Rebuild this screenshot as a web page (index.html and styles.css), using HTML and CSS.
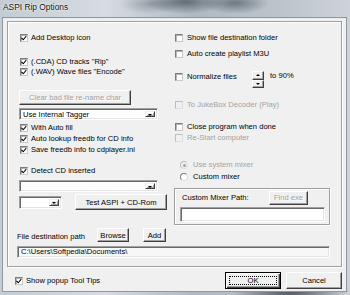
FILE: index.html
```html
<!DOCTYPE html>
<html>

<head>
  <meta charset="UTF-8">
  <title>ASPI Rip Options</title>
  <link rel="stylesheet" href="styles.css">
</head>

<body>
  <div class="window">
    <div class="titlebar">
      <span class="title">ASPI Rip Options</span>
    </div>

    <div class="client">
      <div class="group">
        <div class="cols">
          <!-- Coluna esquerda -->
          <div class="col-left">
            <label class="check r-desktop"><span class="box on"></span>Add Desktop icon</label>
            <label class="check r-cda"><span class="box on"></span>(.CDA) CD tracks "Rip"</label>
            <label class="check"><span class="box on"></span>(.WAV) Wave files "Encode"</label>

            <div class="btn btn-clear disabled">Clear bad file re-name char</div>

            <div class="combo c-tagger"><span class="combo-text">Use Internal Tagger</span><span class="arrow"></span></div>

            <label class="check tall r-autofill"><span class="box on"></span>With Auto fill</label>
            <label class="check tall"><span class="box on"></span>Auto lookup freedb for CD info</label>
            <label class="check tall"><span class="box on"></span>Save freedb info to cdplayer.ini</label>

            <label class="check r-detect"><span class="box on"></span>Detect CD inserted</label>
            <div class="combo c-drive"><span class="combo-text"></span><span class="arrow"></span></div>

            <div class="test-row">
              <div class="combo c-small"><span class="combo-text"></span><span class="arrow"></span></div>
              <div class="btn btn-test">Test ASPI + CD-Rom</div>
            </div>
          </div>

          <!-- Coluna direita -->
          <div class="col-right">
            <label class="check r-show"><span class="box"></span>Show file destination folder</label>
            <label class="check r-m3u"><span class="box"></span>Auto create playlist M3U</label>

            <div class="normalize">
              <label class="check"><span class="box"></span>Normalize files</label>
              <div class="spin">
                <span class="spin-btn"><span class="tri up"></span></span>
                <span class="spin-btn"><span class="tri down"></span></span>
              </div>
              <span class="pct">to 90%</span>
            </div>

            <label class="check disabled r-juke"><span class="box"></span>To JukeBox Decoder (Play)</label>
            <label class="check r-close"><span class="box"></span>Close program when done</label>
            <label class="check tall disabled"><span class="box"></span>Re-Start computer</label>

            <label class="radio disabled r-sys"><span class="dot on"></span>Use system mixer</label>
            <label class="radio r-custom"><span class="dot"></span>Custom mixer</label>

            <div class="mixer">
              <div class="mixer-head">
                <span>Custom Mixer Path:</span>
                <div class="btn btn-find disabled">Find exe</div>
              </div>
              <div class="field mixer-field"></div>
            </div>
          </div>
        </div>

        <div class="dest">
          <div class="dest-head">
            <span class="dest-label">File destination path</span>
            <div class="btn btn-browse">Browse</div>
            <div class="btn btn-add">Add</div>
          </div>
          <div class="field path">C:\Users\Softpedia\Documents\</div>
        </div>
      </div>

      <div class="footer">
        <label class="check"><span class="box on"></span>Show popup Tool Tips</label>
        <div class="actions">
          <div class="btn btn-ok"><span class="focus">OK</span></div>
          <div class="btn btn-cancel">Cancel</div>
        </div>
      </div>
    </div>
  </div>
</body>

</html>
```

FILE: styles.css
```css
* {
  box-sizing: border-box;
}

body {
  margin: 0;
  font-family: "Liberation Sans", Arial, sans-serif;
  font-size: 7.6px;
  color: #000;
  background: #3c4650;
}

.window {
  width: 350px;
  height: 295px;
  overflow: hidden;
  background:
    radial-gradient(ellipse 40px 12px at 185px 2px, rgba(70, 80, 90, 0.75), transparent),
    radial-gradient(ellipse 34px 11px at 235px 3px, rgba(80, 90, 100, 0.7), transparent),
    radial-gradient(ellipse 30px 10px at 150px 4px, rgba(110, 120, 130, 0.5), transparent),
    radial-gradient(ellipse 60px 20px at 290px 290px, rgba(40, 50, 60, 0.8), transparent),
    linear-gradient(90deg, #c3ccd3 0%, #d6dce1 30%, #b0b9c1 55%, #bcc4cb 80%, #cdd3d8 100%);
  display: flex;
  flex-direction: column;
}

.titlebar {
  height: 18px;
  flex: none;
  padding: 2px 0 0 3px;
}

.title {
  font-size: 8.4px;
  line-height: 10px;
  color: #101010;
  text-shadow: 0 0 3px #fff, 0 0 2px #fff;
}

.client {
  flex: 1;
  margin: 0 4px 4px 3px;
  background-color: #f0f0f0;
  border-top: 1px solid #e8ecef;
  box-shadow: 0 0 0 1px #8d98a2;
  display: flex;
  flex-direction: column;
}

.group {
  margin: 2px 4px 0 4px;
  border: 1px solid #a0a0a0;
  box-shadow: inset 1px 1px #fff, 1px 1px #fff;
  padding: 0 11px 8px 11px;
}

.cols {
  display: flex;
  gap: 8px;
}

.col-left {
  width: 148px;
  display: flex;
  flex-direction: column;
}

.col-right {
  flex: 1;
  display: flex;
  flex-direction: column;
}

/* checkbox e radio */
.check,
.radio {
  display: flex;
  align-items: center;
  height: 10px;
  line-height: 10px;
  white-space: nowrap;
}

.check.tall {
  height: 11px;
}

.col-left .check {
  padding-left: 1px;
}

.box {
  width: 8px;
  height: 8px;
  flex: none;
  margin-right: 3px;
  background: #fff;
  border: 1px solid;
  border-color: #7d7d7d #c8c8c8 #c8c8c8 #7d7d7d;
  box-shadow: inset 1px 1px #b4b4b4;
  position: relative;
}

.box.on::after {
  content: "";
  position: absolute;
  left: 1px;
  top: 0px;
  width: 2px;
  height: 4px;
  border: solid #000;
  border-width: 0 1.5px 1.5px 0;
  transform: rotate(40deg);
  transform-origin: 60% 60%;
}

.col-right .box {
  margin-right: 4px;
}

.check.disabled,
.radio.disabled {
  color: #a3a3a3;
}

.check.disabled .box {
  background: #f0f0f0;
  border-color: #bdbdbd #dedede #dedede #bdbdbd;
  box-shadow: none;
}

.radio {
  padding-left: 5px;
}

.dot {
  width: 8px;
  height: 8px;
  flex: none;
  margin-right: 5px;
  border-radius: 50%;
  background: #fff;
  border: 1px solid;
  border-color: #7d7d7d #dcdcdc #dcdcdc #7d7d7d;
  position: relative;
}

.radio.disabled .dot {
  background: #f0f0f0;
  border-color: #b8b8b8 #e0e0e0 #e0e0e0 #b8b8b8;
}

.dot.on::after {
  content: "";
  position: absolute;
  left: 1.5px;
  top: 1.5px;
  width: 3px;
  height: 3px;
  border-radius: 50%;
  background: #000;
}

.radio.disabled .dot.on::after {
  background: #a0a0a0;
}

/* botoes classicos */
.btn {
  display: flex;
  align-items: center;
  justify-content: center;
  background: #f0f0f0;
  border: 1px solid;
  border-color: #fff #3f3f3f #3f3f3f #fff;
  box-shadow: inset -1px -1px #a0a0a0;
  white-space: nowrap;
}

.btn.disabled {
  color: #a0a0a0;
  text-shadow: 1px 1px #fff;
}

.btn-clear {
  width: 112px;
  height: 15px;
  margin-top: 13px;
}

.btn-test {
  width: 92px;
  height: 16px;
}

/* combos */
.combo {
  display: flex;
  background: #fff;
  border: 1px solid;
  border-color: #a0a0a0 #fff #fff #a0a0a0;
  box-shadow: inset 1px 1px #696969, inset -1px -1px #e3e3e3;
  padding: 2px;
}

.combo-text {
  flex: 1;
  line-height: 8px;
  padding-left: 1px;
}

.arrow {
  width: 10px;
  flex: none;
  background: #f0f0f0;
  border: 1px solid;
  border-color: #f0f0f0 #3f3f3f #3f3f3f #f0f0f0;
  box-shadow: inset 1px 1px #fff, inset -1px -1px #a0a0a0;
  position: relative;
}

.arrow::after {
  content: "";
  position: absolute;
  left: 2px;
  top: 2px;
  border-style: solid;
  border-width: 2.5px 2.5px 0 2.5px;
  border-color: #000 transparent transparent transparent;
}

.c-tagger {
  width: 139px;
  height: 12px;
  margin-top: 3px;
}

.c-drive {
  width: 139px;
  height: 12px;
  margin-top: 4px;
}

.test-row {
  display: flex;
  align-items: center;
  gap: 13px;
  margin-top: 2px;
}

.c-small {
  width: 43px;
  height: 13px;
}

/* espacamentos verticais */
.r-desktop,
.r-show {
  margin-top: 11px;
}

.r-cda {
  margin-top: 14px;
}

.r-autofill {
  margin-top: 2px;
}

.r-detect {
  margin-top: 11px;
}

.r-m3u {
  margin-top: 6px;
}

.normalize {
  display: flex;
  align-items: flex-start;
  height: 17px;
  margin-top: 12px;
}

.normalize .check {
  width: 77px;
  margin-top: 1px;
}

.spin {
  display: flex;
  flex-direction: column;
  width: 12px;
  height: 17px;
}

.spin-btn {
  flex: 1;
  background: #f0f0f0;
  border: 1px solid;
  border-color: #fff #3f3f3f #3f3f3f #fff;
  box-shadow: inset -1px -1px #a0a0a0;
  display: flex;
  align-items: center;
  justify-content: center;
}

.tri {
  border-style: solid;
  border-color: transparent;
}

.tri.up {
  border-width: 0 2px 2px 2px;
  border-bottom-color: #000;
}

.tri.down {
  border-width: 2px 2px 0 2px;
  border-top-color: #000;
}

.pct {
  margin-left: 6px;
  line-height: 10px;
}

.r-juke {
  margin-top: 12px;
}

.r-close {
  margin-top: 12px;
}

.r-sys {
  margin-top: 17px;
}

.r-custom {
  margin-top: 2px;
}

.mixer {
  margin-top: 6px;
  margin-left: -1px;
  height: 37px;
  border: 1px solid #a0a0a0;
  box-shadow: inset 1px 1px #fff, 1px 1px #fff;
  padding: 1px 4px 0 6px;
}

.mixer-head {
  display: flex;
  align-items: center;
  justify-content: space-between;
  height: 15px;
  padding-left: 1px;
  padding-right: 17px;
}

.btn-find {
  width: 39px;
  height: 14px;
}

.field {
  background: #fff;
  border: 1px solid;
  border-color: #a0a0a0 #fff #fff #a0a0a0;
  box-shadow: inset 1px 1px #696969, inset -1px -1px #e3e3e3;
}

.mixer-field {
  height: 15px;
  margin: 2px 0 0 -1px;
}

/* destino */
.dest {
  margin-left: -2px;
  margin-top: 3px;
}

.dest-head {
  display: flex;
  align-items: flex-end;
  height: 14px;
}

.dest-label {
  width: 80px;
  line-height: 10px;
}

.btn-browse {
  width: 32px;
  height: 14px;
}

.btn-add {
  width: 23px;
  height: 14px;
  margin-left: 14px;
}

.path {
  margin-top: 4px;
  height: 12px;
  line-height: 10px;
  padding-left: 3px;
  background: #f7f7f7;
}

.footer {
  display: flex;
  align-items: center;
  justify-content: space-between;
  padding: 5px 4px 0 12px;
}

.actions {
  display: flex;
  gap: 5px;
}

.btn-ok,
.btn-cancel {
  width: 56px;
  height: 17px;
}

.btn-ok {
  border: 1px solid #000;
  box-shadow: inset 1px 1px #fff, inset -1px -1px #3f3f3f, inset -2px -2px #a0a0a0;
  padding: 3px;
}

.focus {
  flex: 1;
  align-self: stretch;
  display: flex;
  align-items: center;
  justify-content: center;
  border: 1px dotted #000;
}
```
